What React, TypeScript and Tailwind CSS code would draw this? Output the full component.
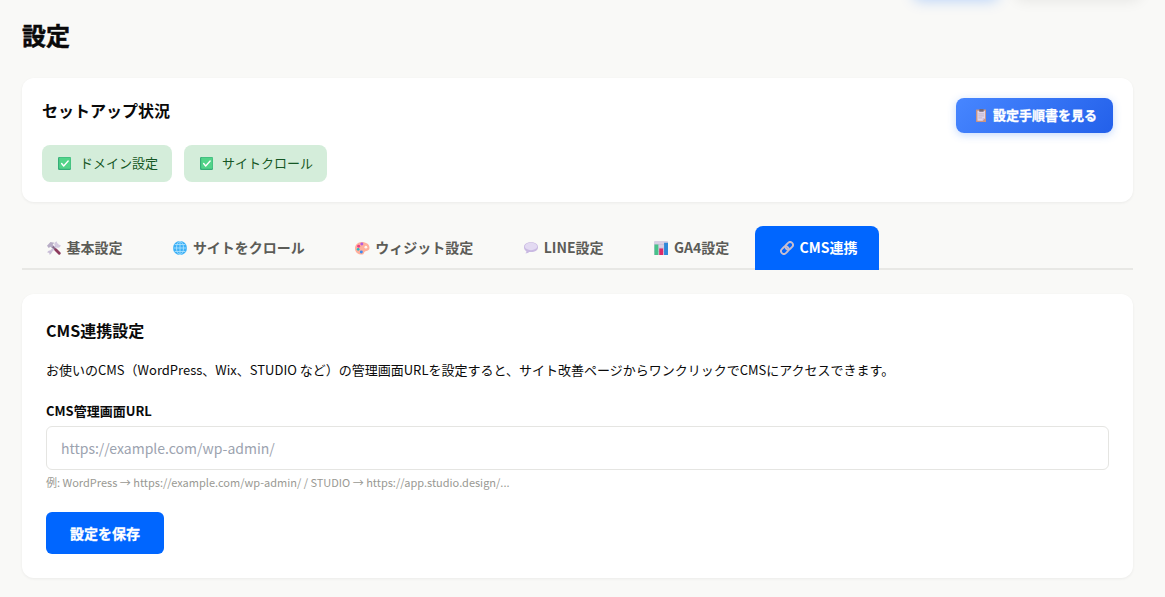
import { useState } from "react";
import clsx from "clsx";

const CheckIcon = () => (
  <svg viewBox="0 0 32 32" className="h-[13px] w-[13px]">
    <rect x="0" y="0" width="32" height="32" rx="3" fill="#36ad78" />
    <rect x="3" y="1" width="28" height="28" rx="2" fill="#52d489" />
    <path d="M9 16l5 6 11-12" fill="none" stroke="#fff" strokeWidth="3.4" strokeLinecap="round" strokeLinejoin="round" />
  </svg>
);

const ClipboardIcon = () => (
  <svg viewBox="0 0 26 32" className="h-[13px] w-[10.5px]">
    <rect x="0" y="1" width="26" height="31" rx="1.5" fill="#c99482" />
    <path d="M3.5 4h19v19l-6 6h-13z" fill="#e0d6ec" />
    <path d="M16.5 29v-6h6z" fill="#c4b2d4" />
    <rect x="8" y="0" width="11" height="7" rx="1.5" fill="#746a78" />
    <path d="M6 12h14M6 17h14M6 22h9" stroke="#b3a5c4" strokeWidth="1.8" />
  </svg>
);

const ToolsIcon = () => (
  <svg viewBox="0 0 32 32" className="h-[14px] w-[14px]">
    <path d="M7 26L24 8" stroke="#cfc4dc" strokeWidth="5" strokeLinecap="round" />
    <path d="M23 1l0 7 8 1c1 5-5 8-10 5l-4-5c-1-5 2-8 6-8z" fill="#d3c9df" />
    <path d="M1 27c0-5 5-7 8-4s1 8-4 8l1-4z" fill="#c9bed7" />
    <path d="M0 11L8 2l9 2-4 4 4 5-5 4-4-4-4 3z" fill="#b8adc6" />
    <path d="M13 13l7 7" stroke="#806783" strokeWidth="4" />
    <path d="M20 20l8 8" stroke="#8d3a5d" strokeWidth="6.5" strokeLinecap="round" />
  </svg>
);

const GlobeIcon = () => (
  <svg viewBox="0 0 32 32" className="h-[14px] w-[14px]">
    <circle cx="16" cy="16" r="16" fill="#3cb0f6" />
    <g fill="none" stroke="#a9e0fd" strokeWidth="2">
      <path d="M1 16h30M16 1v30M4 8h24M4 24h24" />
      <ellipse cx="16" cy="16" rx="8" ry="15" />
    </g>
  </svg>
);

const PaletteIcon = () => (
  <svg viewBox="0 0 32 32" className="h-[14px] w-[14.5px]" preserveAspectRatio="none">
    <path d="M15 2C6 2 0 9 0 17c0 9 7 14 15 14 6 0 4-5 7-7 4-2 10-1 10-9C32 7 24 2 15 2z" fill="#ffaf9c" />
    <circle cx="24" cy="14" r="3" fill="#fff4ee" />
    <circle cx="15" cy="7" r="3.3" fill="#b35be0" />
    <circle cx="8" cy="12" r="3.3" fill="#e83f88" />
    <circle cx="7" cy="19" r="3" fill="#2cb5c7" />
    <circle cx="14" cy="25" r="3.3" fill="#3d8cf0" />
  </svg>
);

const BubbleIcon = () => (
  <svg viewBox="0 0 32 32" className="h-[14px] w-[14px]">
    <path d="M16 3C7 3 0 7 0 14c0 4 2 7 5 9 1 3 0 4-2 5 5 0 7-1 9-3 13 1 20-4 20-11S25 3 16 3z" fill="#c9b9e2" />
    <ellipse cx="16" cy="12.5" rx="14" ry="8.5" fill="#e3daf2" />
  </svg>
);

const ChartIcon = () => (
  <svg viewBox="0 0 32 32" className="h-[14px] w-[14px]">
    <rect width="32" height="32" rx="2" fill="#d8cfe4" />
    <path d="M1 8h30M1 16h30M1 24h30" stroke="#bcafd0" strokeWidth="1" />
    <rect x="1" y="8" width="9" height="24" fill="#48c28a" />
    <rect x="12" y="17" width="9" height="15" fill="#dc2a68" />
    <rect x="23" y="4" width="9" height="28" fill="#3088d8" />
  </svg>
);

const LinkIcon = () => (
  <svg viewBox="0 0 32 32" className="h-[14px] w-[14px]">
    <g fill="none" strokeWidth="4.2" stroke="#c6bdd0">
      <rect x="-9.5" y="-6.5" width="19" height="13" rx="6.5" transform="translate(11 21) rotate(-45)" />
      <rect x="-9.5" y="-6.5" width="19" height="13" rx="6.5" transform="translate(21 11) rotate(-45)" />
    </g>
  </svg>
);

const steps = ["ドメイン設定", "サイトクロール"];

const tabs = [
  { id: "basic", label: "基本設定", icon: ToolsIcon },
  { id: "crawl", label: "サイトをクロール", icon: GlobeIcon },
  { id: "widget", label: "ウィジット設定", icon: PaletteIcon },
  { id: "line", label: "LINE設定", icon: BubbleIcon },
  { id: "ga4", label: "GA4設定", icon: ChartIcon },
  { id: "cms", label: "CMS連携", icon: LinkIcon },
];

export default function App() {
  const [activeTab, setActiveTab] = useState("cms");
  const [cmsUrl, setCmsUrl] = useState("");

  return (
    <div className="relative h-[597px] overflow-hidden bg-[#f9f9f7] pl-[22px] pr-8 font-['Noto_Sans_CJK_JP',sans-serif] text-[#0a0a0a]">
      {/* нижний край плавающих кнопок */}
      <div className="absolute right-[24px] -top-[39px] flex gap-4">
        <div className="h-9 w-[86px] rounded-lg bg-[#0066ff] shadow-[0_4px_14px_rgba(0,102,255,0.25)]" />
        <div className="h-9 w-[126px] rounded-lg bg-white shadow-[0_4px_14px_rgba(0,0,0,0.08)]" />
      </div>

      <h1 className="pt-4 text-2xl leading-[38px] font-bold [-webkit-text-stroke:0.5px]">設定</h1>

      <section className="mt-6 flex h-[124px] items-start justify-between rounded-xl bg-white p-5 shadow-[0_1px_3px_rgba(0,0,0,0.06)]">
        <div>
          <h2 className="text-base leading-6 font-bold">セットアップ状況</h2>
          <div className="mt-[23px] flex gap-3">
            {steps.map((step) => (
              <div
                key={step}
                className="flex h-[37px] items-center rounded-lg bg-[#d4edda] px-[14px] pb-0.5 text-[13px] text-[#155724]"
              >
                <span className="w-6 pt-px pl-0.5">
                  <CheckIcon />
                </span>
                {step}
              </div>
            ))}
          </div>
        </div>
        <button className="flex h-[35px] items-center rounded-lg bg-linear-135 from-[#4786ff] to-[#2360ea] px-4 pb-0.5 text-[13px] font-bold text-white shadow-[0_2px_8px_rgba(59,130,246,0.3)] [-webkit-text-stroke:0.3px]">
          <span className="w-[21px] pt-px pl-1">
            <ClipboardIcon />
          </span>
          設定手順書を見る
        </button>
      </section>

      <nav className="mt-6 flex h-11 gap-1 border-b-2 border-[#e8e8e5]">
        {tabs.map((tab) => (
          <button
            key={tab.id}
            onClick={() => setActiveTab(tab.id)}
            className={clsx(
              "flex h-11 shrink-0 items-center rounded-t-lg px-[22px] pb-0.5 text-sm font-bold",
              activeTab === tab.id ? "bg-[#0066ff] text-white" : "text-[#5c5c57]"
            )}
          >
            <span className="w-[22.45px] pt-0.5 pl-[2.5px]">
              <tab.icon />
            </span>
            {tab.label}
          </button>
        ))}
      </nav>

      <section className="mt-6 h-[284px] rounded-xl bg-white p-6 shadow-[0_1px_3px_rgba(0,0,0,0.06)]">
        <h2 className="text-base leading-6 font-bold">CMS連携設定</h2>
        <p className="mt-[17px] text-[13px] leading-[21px]">
          お使いのCMS（WordPress、Wix、STUDIO など）の管理画面URLを設定すると、サイト改善ページからワンクリックでCMSにアクセスできます。
        </p>
        <label htmlFor="cms-url" className="mt-5 block text-[13px] leading-[21px] font-bold">
          CMS管理画面URL
        </label>
        <input
          id="cms-url"
          type="url"
          value={cmsUrl}
          onChange={(e) => setCmsUrl(e.target.value)}
          placeholder="https://example.com/wp-admin/"
          className="mt-[5px] block h-11 w-full rounded-md border border-[#e5e5e2] px-[14px] text-sm placeholder:text-[#9ca3af]"
        />
        <div className="mt-[3px] text-[11px] leading-[18px] text-[#999993]">
          例: WordPress → https://example.com/wp-admin/ / STUDIO → https://app.studio.design/...
        </div>
        <button className="mt-[21px] h-[42px] rounded-md bg-[#0066ff] px-6 text-sm font-bold text-white [-webkit-text-stroke:0.3px]">
          設定を保存
        </button>
      </section>
    </div>
  );
}
